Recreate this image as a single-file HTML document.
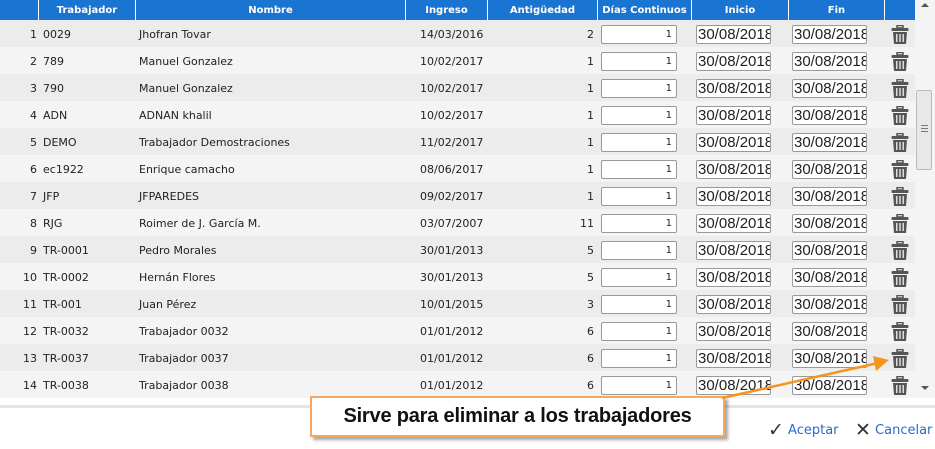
<!DOCTYPE html>
<html><head><meta charset="utf-8"><style>
*{margin:0;padding:0;box-sizing:border-box}
body{width:935px;height:449px;background:#fff;position:relative;overflow:hidden;font-family:"DejaVu Sans","Liberation Sans",sans-serif;font-size:11px;color:#222}
.hd{position:absolute;top:0;left:0;width:915px;height:20px;background:#1a75d2}
.hc{position:absolute;top:0;height:20px;line-height:22px;color:#fff;font-weight:bold;font-size:10px;text-align:center;border-left:1px solid #fff}
.row{position:absolute;left:0;width:915px;height:27px}
.c{position:absolute;top:1px;line-height:27px;white-space:nowrap}
.in{position:absolute;top:5px;height:19px;background:#fff;border:1px solid #999;border-radius:2px;line-height:17px}
.num{font-size:10px;text-align:right;padding-right:4px}
.dt{font-family:"Liberation Sans",sans-serif;font-size:15px;padding-left:1px;overflow:hidden;white-space:nowrap}
.sb{position:absolute;left:915px;top:0;width:20px;height:398px;background:#f4f4f4}
</style></head><body>
<div class="hd">
<div class="hc" style="left:38px;width:97px">Trabajador</div>
<div class="hc" style="left:135px;width:270px">Nombre</div>
<div class="hc" style="left:405px;width:82px">Ingreso</div>
<div class="hc" style="left:487px;width:110px">Antigüedad</div>
<div class="hc" style="left:597px;width:94px">Días Continuos</div>
<div class="hc" style="left:691px;width:97px">Inicio</div>
<div class="hc" style="left:788px;width:96px">Fin</div>
<div class="hc" style="left:884px;width:31px"></div>
</div>
<div id="rows"></div>
<div class="sb">
<div style="position:absolute;left:6px;top:3px;border:4px solid transparent;border-bottom:4px solid #555;border-top:0"></div>
<div style="position:absolute;left:1px;top:90px;width:16px;height:80px;background:#e8e8e8;border:1px solid #bbb;border-radius:2px"></div>
<div style="position:absolute;left:6px;top:125px;width:7px;height:1px;background:#777;box-shadow:0 3px 0 #777,0 6px 0 #777"></div>
<div style="position:absolute;left:6px;top:386px;border:4px solid transparent;border-top:4px solid #555;border-bottom:0"></div>
</div>
<div style="position:absolute;left:0;top:405px;width:935px;height:3px;background:#e4e4e4"></div>
<div style="position:absolute;left:768px;top:419px;font-size:13px;color:#2a6bc4;white-space:nowrap"><span style="color:#333;font-size:19px;vertical-align:-2px">✓</span> Aceptar</div>
<div style="position:absolute;left:855px;top:419px;font-size:13px;color:#2a6bc4;white-space:nowrap"><span style="color:#333;font-size:19px;vertical-align:-2px">✕</span> Cancelar</div>
<div style="position:absolute;left:310px;top:396px;width:415px;height:41px;background:#fff;border:2px solid #f5a860;box-shadow:3px 3px 3px rgba(0,0,0,.35);text-align:center;line-height:37px;font-family:'Liberation Sans',sans-serif;font-weight:bold;font-size:20px;color:#111;letter-spacing:-0.2px">Sirve para eliminar a los trabajadores</div>
<svg style="position:absolute;left:0;top:0" width="935" height="449"><line x1="722" y1="398" x2="878" y2="363" stroke="#f7941d" stroke-width="2.5"/><polygon points="889,360 873,356 876,371" fill="#f7941d"/></svg>
<script>
var d=[["0029","Jhofran Tovar","14/03/2016",2],["789","Manuel Gonzalez","10/02/2017",1],["790","Manuel Gonzalez","10/02/2017",1],["ADN","ADNAN khalil","10/02/2017",1],["DEMO","Trabajador Demostraciones","11/02/2017",1],["ec1922","Enrique camacho","08/06/2017",1],["JFP","JFPAREDES","09/02/2017",1],["RJG","Roimer de J. García M.","03/07/2007",11],["TR-0001","Pedro Morales","30/01/2013",5],["TR-0002","Hernán Flores","30/01/2013",5],["TR-001","Juan Pérez","10/01/2015",3],["TR-0032","Trabajador 0032","01/01/2012",6],["TR-0037","Trabajador 0037","01/01/2012",6],["TR-0038","Trabajador 0038","01/01/2012",6]];
var trash='<svg width="18" height="20" viewBox="0 0 18 20"><rect x="6" y="0.5" width="6" height="2.5" fill="none" stroke="#555" stroke-width="1.5"/><rect x="0.5" y="3" width="17" height="3" rx="1" fill="#555"/><path d="M2 7h14l-1 12H3z" fill="#555"/><rect x="5" y="9" width="1.5" height="8" fill="#ddd"/><rect x="8.3" y="9" width="1.5" height="8" fill="#ddd"/><rect x="11.5" y="9" width="1.5" height="8" fill="#ddd"/></svg>';
var h='';
d.forEach(function(r,i){
var bg=i%2?'#f4f4f4':'#ececec';
h+='<div class="row" style="top:'+(20+27*i)+'px;background:'+bg+'">'+
'<div class="c" style="left:0;width:37px;text-align:right">'+(i+1)+'</div>'+
'<div class="c" style="left:43px">'+r[0]+'</div>'+
'<div class="c" style="left:139px">'+r[1]+'</div>'+
'<div class="c" style="left:420px">'+r[2]+'</div>'+
'<div class="c" style="left:487px;width:107px;text-align:right">'+r[3]+'</div>'+
'<div class="in num" style="left:601px;width:76px">1</div>'+
'<div class="in dt" style="left:696px;width:75px">30/08/2018</div>'+
'<div class="in dt" style="left:792px;width:75px">30/08/2018</div>'+
'<div style="position:absolute;left:891px;top:5px">'+trash+'</div></div>';
});
document.getElementById('rows').innerHTML=h;
</script>
</body></html>
